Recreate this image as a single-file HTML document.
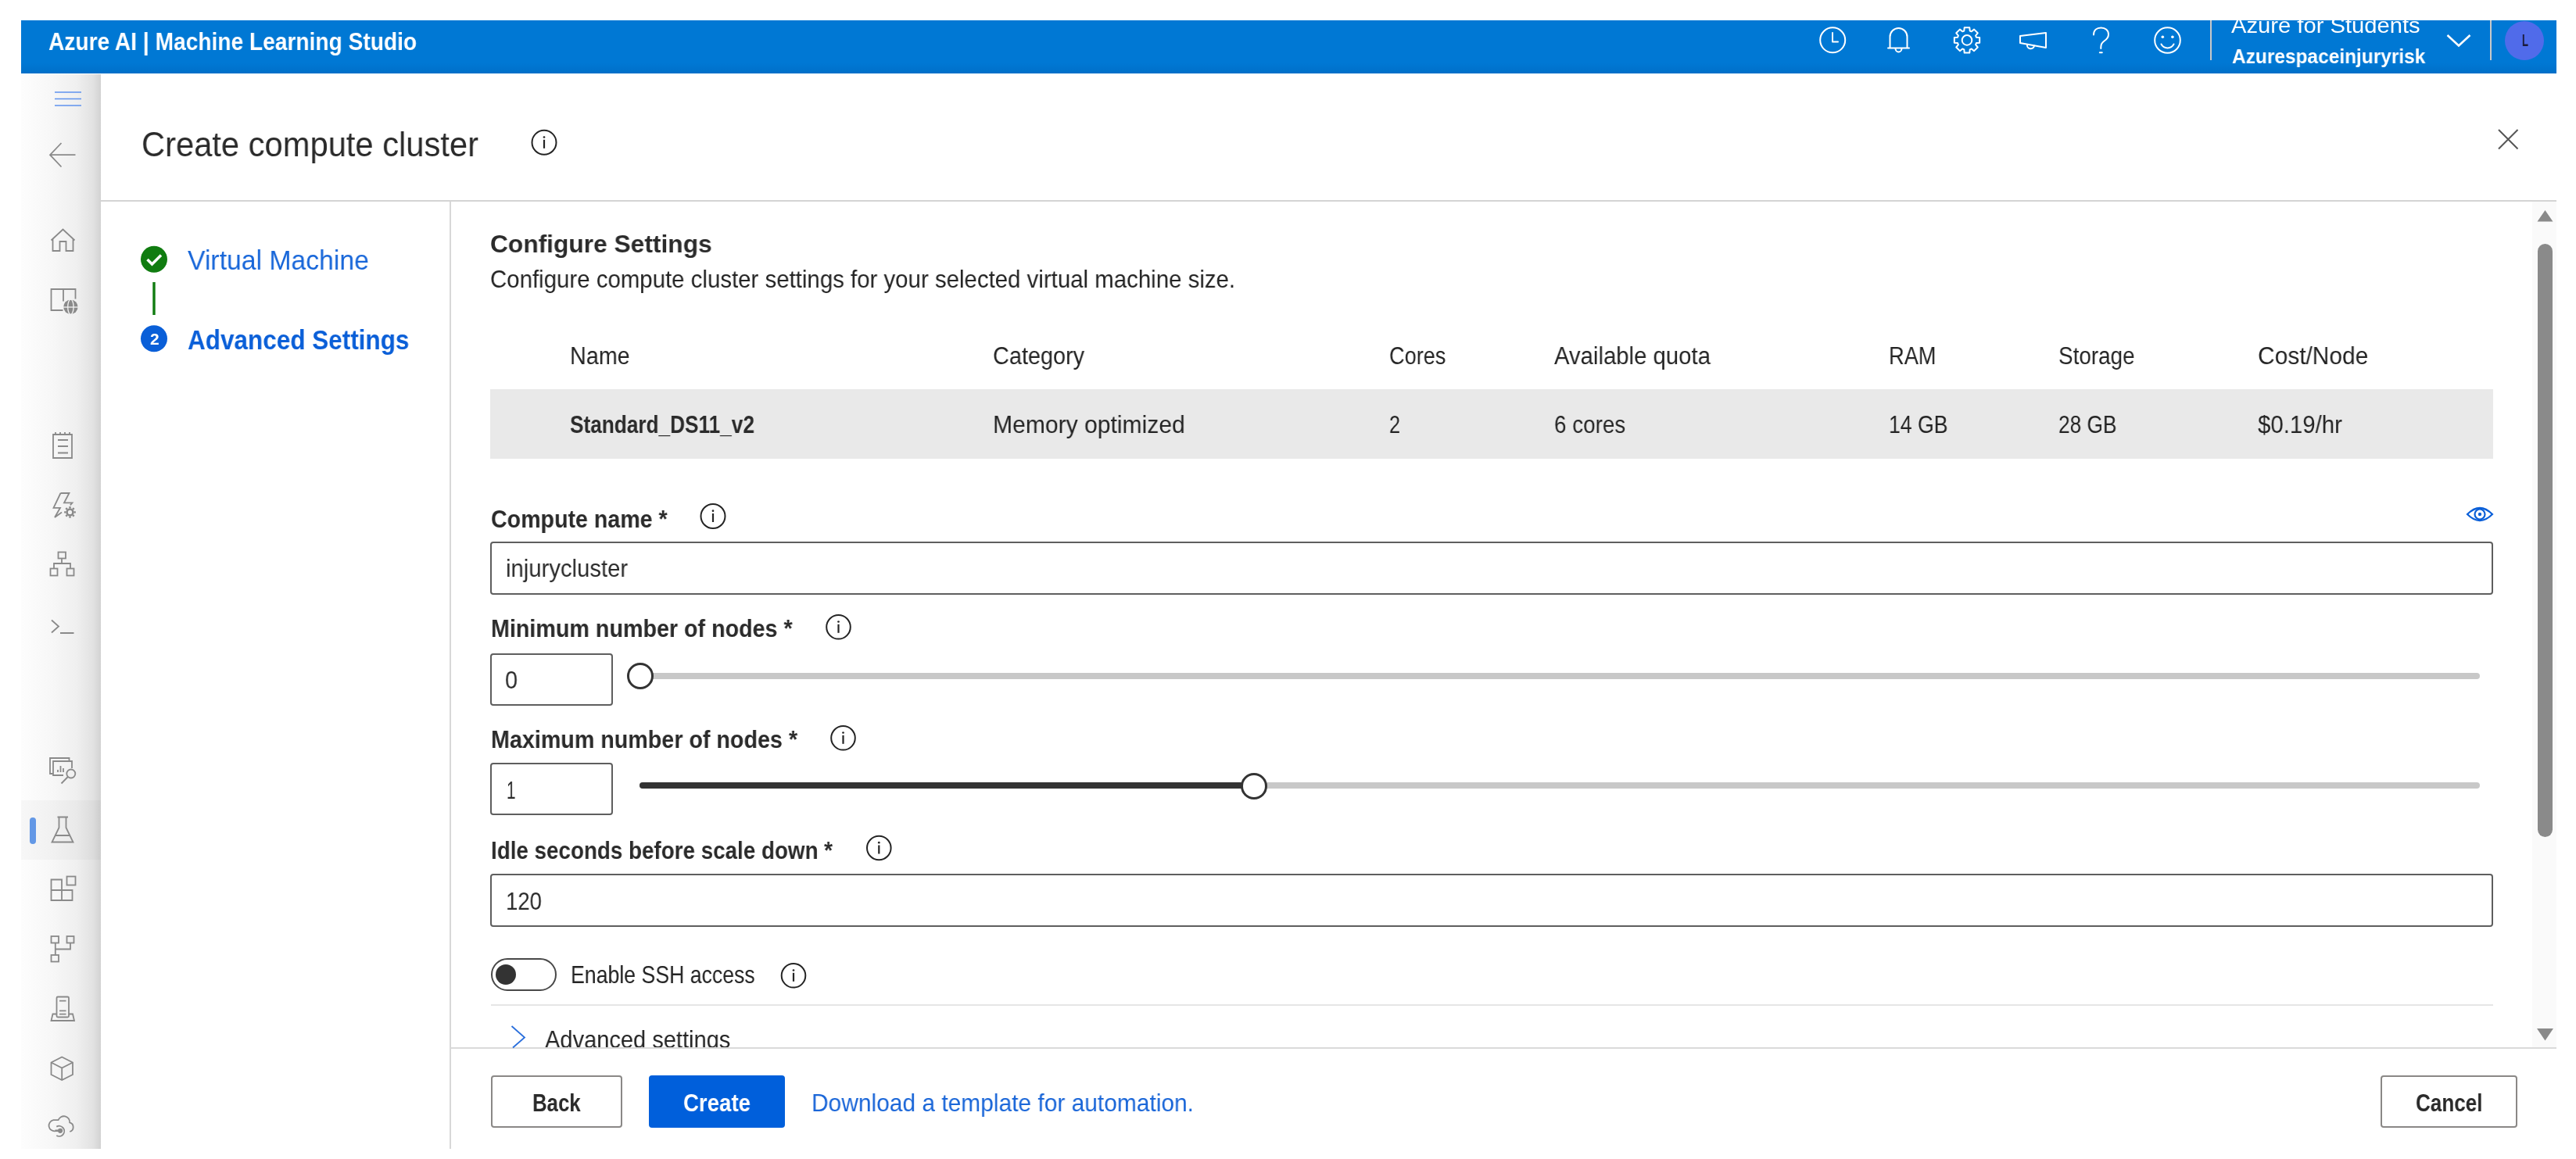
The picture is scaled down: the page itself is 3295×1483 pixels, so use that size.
<!DOCTYPE html>
<html><head><meta charset="utf-8"><title>Create compute cluster</title>
<style>
html,body{margin:0;padding:0;}
body{width:3295px;height:1483px;overflow:hidden;position:relative;background:#fff;font-family:"Liberation Sans",sans-serif;}
.t{position:absolute;white-space:nowrap;transform-origin:0 0;will-change:transform;}
.r{position:absolute;}
svg{position:absolute;left:0;top:0;}
</style></head><body>
<div class="r" style="left:27px;top:26px;width:3243px;height:68px;background:linear-gradient(to bottom,#0078d4 0,#0078d4 80%,#006fc8 100%);"></div>
<div class="r" style="left:27px;top:95px;width:102px;height:1375px;background:linear-gradient(to right,#fdfdfd 0%,#f7f7f7 40%,#efefef 70%,#e2e2e2 90%,#d2d2d2 100%);"></div>
<div class="r" style="left:27px;top:1024px;width:102px;height:76px;background:rgba(0,0,0,0.025);"></div>
<div class="r" style="left:38px;top:1046px;width:8px;height:34px;background:#6398e6;border-radius:4px;"></div>
<div class="r" style="left:129px;top:94px;width:3141px;height:1376px;background:#fff;"></div>
<div class="r" style="left:129px;top:256px;width:3141px;height:2px;background:#d4d4d4;"></div>
<div class="r" style="left:575px;top:258px;width:2px;height:1212px;background:#d8d8d8;"></div>
<div class="r" style="left:577px;top:1340px;width:2693px;height:2px;background:#dadada;"></div>
<div class="r" style="left:3239px;top:258px;width:31px;height:1082px;background:#fafafa;"></div>
<div class="r" style="left:3246px;top:312px;width:19px;height:759px;background:#8a8a8a;border-radius:10px;"></div>
<div class="t" style="left:62.00px;top:38.14px;font-size:31.5px;line-height:31.5px;color:#ffffff;font-weight:bold;transform:scaleX(0.8931);">Azure AI | Machine Learning Studio</div>
<div class="r" style="left:2830px;top:26px;width:300px;height:68px;overflow:hidden"><div class="t" style="left:24.30px;top:-7.00px;font-size:28px;line-height:28px;color:#ffffff;transform:scaleX(1.0423);">Azure for Students</div>
</div>
<div class="t" style="left:2855.00px;top:59.67px;font-size:25.2px;line-height:25.2px;color:#ffffff;font-weight:bold;transform:scaleX(0.9706);">Azurespaceinjuryrisk</div>
<div class="r" style="left:2827px;top:26px;width:2px;height:51px;background:#c8c8c8;"></div>
<div class="r" style="left:3185px;top:26px;width:2px;height:51px;background:#c8c8c8;"></div>
<div class="r" style="left:3204px;top:27px;width:50px;height:50px;background:#506bea;border-radius:50%;"></div>
<div class="t" style="left:3226.00px;top:41.80px;font-size:21.5px;line-height:21.5px;color:#1b1b3a;font-weight:bold;transform:scaleX(0.6107);">L</div>
<div class="t" style="left:181.00px;top:162.75px;font-size:44px;line-height:44px;color:#2a2a2a;transform:scaleX(0.9475);">Create compute cluster</div>
<div class="t" style="left:239.50px;top:316.21px;font-size:34.6px;line-height:34.6px;color:#1766d9;transform:scaleX(0.9756);">Virtual Machine</div>
<div class="t" style="left:239.50px;top:416.97px;font-size:35px;line-height:35px;color:#0a5fd8;font-weight:bold;transform:scaleX(0.8997);">Advanced Settings</div>
<div class="t" style="left:627.00px;top:296.41px;font-size:32px;line-height:32px;color:#2b2b2b;font-weight:bold;transform:scaleX(0.9909);">Configure Settings</div>
<div class="t" style="left:627.00px;top:341.41px;font-size:32px;line-height:32px;color:#242424;transform:scaleX(0.9191);">Configure compute cluster settings for your selected virtual machine size.</div>
<div class="r" style="left:627px;top:498px;width:2562px;height:89px;background:#e9e9e9;"></div>
<div class="t" style="left:729.00px;top:439.56px;font-size:31px;line-height:31px;color:#242424;transform:scaleX(0.9262);">Name</div>
<div class="t" style="left:1270.40px;top:439.56px;font-size:31px;line-height:31px;color:#242424;transform:scaleX(0.9308);">Category</div>
<div class="t" style="left:1777.00px;top:439.56px;font-size:31px;line-height:31px;color:#242424;transform:scaleX(0.8742);">Cores</div>
<div class="t" style="left:1988.00px;top:439.56px;font-size:31px;line-height:31px;color:#242424;transform:scaleX(0.9456);">Available quota</div>
<div class="t" style="left:2415.50px;top:439.56px;font-size:31px;line-height:31px;color:#242424;transform:scaleX(0.8781);">RAM</div>
<div class="t" style="left:2633.00px;top:439.56px;font-size:31px;line-height:31px;color:#242424;transform:scaleX(0.8996);">Storage</div>
<div class="t" style="left:2887.60px;top:439.56px;font-size:31px;line-height:31px;color:#242424;transform:scaleX(0.9645);">Cost/Node</div>
<div class="t" style="left:729.00px;top:528.34px;font-size:31.5px;line-height:31.5px;color:#2b2b2b;font-weight:bold;transform:scaleX(0.8319);">Standard_DS11_v2</div>
<div class="t" style="left:1270.40px;top:528.34px;font-size:31.5px;line-height:31.5px;color:#242424;transform:scaleX(0.9553);">Memory optimized</div>
<div class="t" style="left:1777.00px;top:528.34px;font-size:31.5px;line-height:31.5px;color:#242424;transform:scaleX(0.8000);">2</div>
<div class="t" style="left:1988.00px;top:528.34px;font-size:31.5px;line-height:31.5px;color:#242424;transform:scaleX(0.8838);">6 cores</div>
<div class="t" style="left:2415.50px;top:528.34px;font-size:31.5px;line-height:31.5px;color:#242424;transform:scaleX(0.8455);">14 GB</div>
<div class="t" style="left:2633.00px;top:528.34px;font-size:31.5px;line-height:31.5px;color:#242424;transform:scaleX(0.8343);">28 GB</div>
<div class="t" style="left:2887.60px;top:528.34px;font-size:31.5px;line-height:31.5px;color:#242424;transform:scaleX(0.9343);">$0.19/hr</div>
<div class="t" style="left:627.60px;top:648.21px;font-size:32px;line-height:32px;color:#2b2b2b;font-weight:bold;transform:scaleX(0.8939);">Compute name *</div>
<div class="r" style="left:627px;top:693px;width:2562px;height:68px;box-sizing:border-box;border:2px solid #5e5e5e;border-radius:4px;background:#fff;"></div>
<div class="t" style="left:646.60px;top:712.14px;font-size:31.5px;line-height:31.5px;color:#2b2b2b;transform:scaleX(0.9292);">injurycluster</div>
<div class="t" style="left:628.00px;top:788.41px;font-size:32px;line-height:32px;color:#2b2b2b;font-weight:bold;transform:scaleX(0.8964);">Minimum number of nodes *</div>
<div class="r" style="left:627px;top:836px;width:157px;height:67px;box-sizing:border-box;border:2px solid #5e5e5e;border-radius:4px;background:#fff;"></div>
<div class="t" style="left:646.00px;top:854.84px;font-size:31.5px;line-height:31.5px;color:#2b2b2b;transform:scaleX(0.9143);">0</div>
<div class="t" style="left:628.00px;top:929.91px;font-size:32px;line-height:32px;color:#2b2b2b;font-weight:bold;transform:scaleX(0.8962);">Maximum number of nodes *</div>
<div class="r" style="left:627px;top:976px;width:157px;height:67px;box-sizing:border-box;border:2px solid #5e5e5e;border-radius:4px;background:#fff;"></div>
<div class="t" style="left:647.50px;top:996.34px;font-size:31.5px;line-height:31.5px;color:#2b2b2b;transform:scaleX(0.6571);">1</div>
<div class="t" style="left:628.00px;top:1071.66px;font-size:32px;line-height:32px;color:#2b2b2b;font-weight:bold;transform:scaleX(0.8683);">Idle seconds before scale down *</div>
<div class="r" style="left:627px;top:1118px;width:2562px;height:68px;box-sizing:border-box;border:2px solid #5e5e5e;border-radius:4px;background:#fff;"></div>
<div class="t" style="left:647.00px;top:1138.34px;font-size:31.5px;line-height:31.5px;color:#2b2b2b;transform:scaleX(0.8745);">120</div>
<div class="r" style="left:818px;top:861px;width:2354px;height:8px;background:#c8c8c8;border-radius:4px;"></div>
<div class="r" style="left:802px;top:848px;width:34px;height:34px;box-sizing:border-box;border:3px solid #333;border-radius:50%;background:#fff;"></div>
<div class="r" style="left:818px;top:1001px;width:2354px;height:8px;background:#c8c8c8;border-radius:4px;"></div>
<div class="r" style="left:818px;top:1001px;width:786px;height:8px;background:#333;border-radius:4px 0 0 4px;"></div>
<div class="r" style="left:1587px;top:989px;width:34px;height:34px;box-sizing:border-box;border:3px solid #333;border-radius:50%;background:#fff;"></div>
<div class="r" style="left:628px;top:1226px;width:84px;height:42px;box-sizing:border-box;border:2px solid #484848;border-radius:21px;background:#fff;"></div>
<div class="r" style="left:634px;top:1234px;width:26px;height:26px;background:#333;border-radius:50%;"></div>
<div class="t" style="left:729.90px;top:1231.11px;font-size:32px;line-height:32px;color:#242424;transform:scaleX(0.8335);">Enable SSH access</div>
<div class="r" style="left:628px;top:1285px;width:2561px;height:2px;background:#e6e6e6;"></div>
<div class="r" style="left:577px;top:1287px;width:2662px;height:53px;overflow:hidden"><div class="t" style="left:119.50px;top:26.91px;font-size:32px;line-height:32px;color:#242424;transform:scaleX(0.9075);">Advanced settings</div>
</div>
<div class="r" style="left:628px;top:1376px;width:168px;height:67px;box-sizing:border-box;border:2px solid #8a8886;border-radius:4px;background:#fff;"></div>
<div class="t" style="left:681.00px;top:1394.91px;font-size:32px;line-height:32px;color:#2a2a2a;font-weight:bold;transform:scaleX(0.8055);">Back</div>
<div class="r" style="left:830px;top:1376px;width:174px;height:67px;background:#005fdb;border-radius:4px;"></div>
<div class="t" style="left:874.00px;top:1394.91px;font-size:32px;line-height:32px;color:#ffffff;font-weight:bold;transform:scaleX(0.8635);">Create</div>
<div class="t" style="left:1038.00px;top:1394.91px;font-size:32px;line-height:32px;color:#1a66d8;transform:scaleX(0.9350);">Download a template for automation.</div>
<div class="r" style="left:3045px;top:1376px;width:175px;height:67px;box-sizing:border-box;border:2px solid #8a8886;border-radius:4px;background:#fff;"></div>
<div class="t" style="left:3089.80px;top:1394.61px;font-size:32px;line-height:32px;color:#2a2a2a;font-weight:bold;transform:scaleX(0.8141);">Cancel</div>
<svg width="3295" height="1483" viewBox="0 0 3295 1483"><g fill="none" stroke="#fff" stroke-width="2" stroke-linecap="round" stroke-linejoin="round"><circle cx="2344.2" cy="51.3" r="16"/><path d="M2344 42 V53.5 H2351"/><path d="M2417.5 61 V47 A11 11 0 0 1 2439.5 47 V61"/><path d="M2415 61.5 H2442"/><path d="M2424.5 62 A4 4.5 0 0 0 2432.5 62"/><path d="M2527.94 47.69 L2532.17 48.10 L2532.17 54.70 L2527.94 55.11 L2527.07 57.21 L2529.76 60.50 L2525.10 65.16 L2521.81 62.47 L2519.71 63.34 L2519.30 67.57 L2512.70 67.57 L2512.29 63.34 L2510.19 62.47 L2506.90 65.16 L2502.24 60.50 L2504.93 57.21 L2504.06 55.11 L2499.83 54.70 L2499.83 48.10 L2504.06 47.69 L2504.93 45.59 L2502.24 42.30 L2506.90 37.64 L2510.19 40.33 L2512.29 39.46 L2512.70 35.23 L2519.30 35.23 L2519.71 39.46 L2521.81 40.33 L2525.10 37.64 L2529.76 42.30 L2527.07 45.59Z"/><circle cx="2516" cy="51.4" r="6.3"/><path d="M2584 46 L2617 42 V61 L2584 55 Z"/><path d="M2593 57 A4.5 4.5 0 0 0 2602 58.5"/><path d="M2678 44.5 C2678 38.5 2682 35.5 2687.5 35.5 C2693 35.5 2697 38.8 2697 44 C2697 48.5 2694.5 50.5 2691.5 52.5 C2688.5 54.5 2687.3 56.5 2687.3 60.5 V62"/><path d="M2685.8 67.3 H2688.8"/><circle cx="2772.5" cy="51.5" r="16.3"/><path d="M2764.5 56.5 A9 9 0 0 0 2780.5 56.5"/></g><circle cx="2766.3" cy="47.2" r="1.8" fill="#fff"/><circle cx="2778.9" cy="47.2" r="1.8" fill="#fff"/><path d="M3130.5 45 L3145 58.5 L3159.5 45" fill="none" stroke="#fff" stroke-width="2.6"/><path d="M70 118 H104 M70 126.5 H104 M70 135 H104" stroke="#5f93ee" stroke-width="1.6" fill="none"/><g fill="none" stroke="#8a8a8a" stroke-width="1.8" stroke-linejoin="miter"><path d="M64 198.2 H96.5 M78.5 183 L64 198.2 L78.5 213.5"/><path d="M65.5 307.5 L80.5 293.5 L95.5 307.5 M67.5 306 V321 H76.5 V309 H84.5 V321 H93.5 V306"/><path d="M81 385.5 V370 H65.5 V397 H80.5 M81 370 H96.5 V382.5"/></g><circle cx="90.4" cy="392.8" r="9.2" fill="#8a8a8a"/><g fill="none" stroke="#f3f3f3" stroke-width="1.3"><ellipse cx="90.4" cy="392.8" rx="3.7" ry="9.6"/><path d="M80.5 393 H100.5"/></g><g fill="none" stroke="#8a8a8a" stroke-width="1.8" stroke-linejoin="miter"><path d="M68 556 H92 V586 H68 Z M74 563 H87 M74 571 H87 M74 579.5 H87"/><path d="M71 553 V557 M77 553 V557 M83 553 V557 M89 553 V557"/><path d="M77.5 631 H88.5 L82 643.3 H92.5 L89.8 646.5 M79 655.5 L70 662 L77 649.8 H68.5 L77.5 631"/><circle cx="89.5" cy="655.4" r="3.9" stroke-width="2.6"/><path stroke-width="2.4" d="M89.5 648 V650.5 M89.5 660.3 V662.8 M82.1 655.4 H84.6 M94.4 655.4 H96.9 M84.3 650.2 L86 651.9 M93 658.9 L94.7 660.6 M84.3 660.6 L86 658.9 M93 651.9 L94.7 650.2"/><rect x="74.5" y="706.5" width="9.5" height="8"/><rect x="64.5" y="727.5" width="9" height="9"/><rect x="85.5" y="727.5" width="9" height="9"/><path d="M79 714.5 V721 M69 727.5 V721 H90 V727.5"/><path d="M66 793.5 L75 801.5 L66 809.5 M77 810 H94.5"/><path d="M67.5 990 H64 V970 H88.5 V974"/><path d="M81 992 H68 V974 H92 V983"/><path d="M74 988 V985 M77.5 988 V980 M81 988 V983"/><circle cx="90.8" cy="990" r="5.5"/><path d="M86.8 994 L78.5 1002.5"/><path d="M73.5 1045.5 H87 M75.5 1045.5 V1059 L66.5 1077.5 H93.5 L84.5 1059 V1045.5 M71 1069 H89"/><path d="M65.5 1125.5 H79 V1152 H65.5 Z M65.5 1139 H92.5 V1152 H79"/><rect x="85.5" y="1121.5" width="11" height="11"/><rect x="65.5" y="1198" width="9.5" height="8.5"/><rect x="85.5" y="1198" width="9" height="8.5"/><rect x="65.5" y="1222" width="9.5" height="8.5"/><path d="M70.8 1206.5 V1222 M70.8 1214.5 H90 V1206.5"/><rect x="72.5" y="1275.5" width="15.5" height="26" rx="1.5"/><path d="M76 1280.7 H84.5 M76 1293.3 H84.5 M76 1297.6 H84.5"/><path d="M72.5 1297.5 H67.5 L65.5 1306 H95 L93 1297.5 H88"/><path d="M79.2 1352.5 L93 1359.5 V1375 L79.2 1382 L65.5 1375 V1359.5 Z M65.5 1359.5 L79.2 1366.5 L93 1359.5 M79.2 1366.5 V1382"/><path d="M71 1447.2 A6.9 6.9 0 0 1 68.3 1433.2 H74.5 A7.6 7.6 0 0 1 89.2 1436.4 A6 6 0 0 1 89.2 1448"/><path d="M72.3 1441.6 A6.6 6.6 0 1 1 72.3 1453"/><path d="M70.5 1446.8 H77" stroke-width="2.6"/></g><circle cx="77.1" cy="1446.8" r="3.1" fill="#8a8a8a"/><circle cx="696" cy="182.3" r="15.5" fill="none" stroke="#242424" stroke-width="2"/><rect x="694.9" y="178.8" width="2.2" height="11" fill="#242424"/><circle cx="696" cy="175.5" r="1.35" fill="#242424"/><path d="M3196 166 L3220.5 190.5 M3220.5 166 L3196 190.5" stroke="#555" stroke-width="2" fill="none"/><circle cx="197" cy="331.8" r="17" fill="#107c10"/><path d="M188.5 332 L194.5 338 L206 326.5" stroke="#fff" stroke-width="3.5" fill="none"/><rect x="195.3" y="361" width="3.4" height="42" fill="#107c10"/><circle cx="197" cy="433.2" r="17" fill="#0a5fd8"/><circle cx="912" cy="660.5" r="15.5" fill="none" stroke="#242424" stroke-width="2"/><rect x="910.9" y="657.0" width="2.2" height="11" fill="#242424"/><circle cx="912" cy="653.7" r="1.35" fill="#242424"/><circle cx="1072.5" cy="802.3" r="15.3" fill="none" stroke="#242424" stroke-width="2"/><rect x="1071.4" y="798.8" width="2.2" height="11" fill="#242424"/><circle cx="1072.5" cy="795.5" r="1.35" fill="#242424"/><circle cx="1078.5" cy="944.3" r="15.3" fill="none" stroke="#242424" stroke-width="2"/><rect x="1077.4" y="940.8" width="2.2" height="11" fill="#242424"/><circle cx="1078.5" cy="937.5" r="1.35" fill="#242424"/><circle cx="1124.3" cy="1085" r="15.3" fill="none" stroke="#242424" stroke-width="2"/><rect x="1123.2" y="1081.5" width="2.2" height="11" fill="#242424"/><circle cx="1124.3" cy="1078.2" r="1.35" fill="#242424"/><circle cx="1015" cy="1248.3" r="15.3" fill="none" stroke="#242424" stroke-width="2"/><rect x="1013.9" y="1244.8" width="2.2" height="11" fill="#242424"/><circle cx="1015" cy="1241.5" r="1.35" fill="#242424"/><path d="M3156 658 Q3172 642 3188 658 Q3172 674 3156 658 Z" fill="none" stroke="#0a5fd8" stroke-width="2.2"/><circle cx="3172" cy="658" r="6.5" fill="none" stroke="#0a5fd8" stroke-width="2.2"/><circle cx="3172" cy="658" r="2.2" fill="#0a5fd8"/><path d="M3255.5 269 L3265.5 283.5 H3245.5 Z" fill="#8a8a8a"/><path d="M3245 1316 H3266 L3255.5 1331.5 Z" fill="#8a8a8a"/><path d="M654.5 1313 L671 1327.5 L656 1340.5" fill="none" stroke="#2a6fdc" stroke-width="1.8"/></svg>
<div class="t" style="left:191.80px;top:424.25px;font-size:20.5px;line-height:20.5px;color:#ffffff;font-weight:bold;transform:scaleX(1.0263);">2</div>
</body></html>
